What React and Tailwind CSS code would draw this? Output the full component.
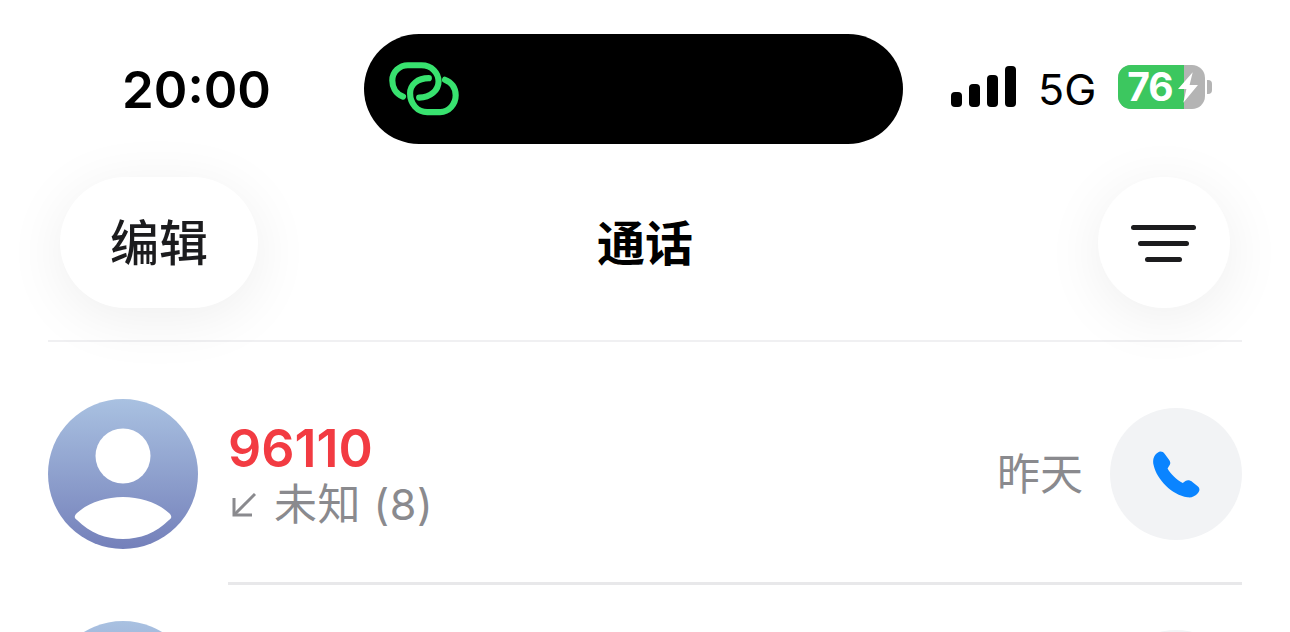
const SANS = "font-['Inter','Noto_Sans_CJK_SC',sans-serif]";

function LinkIcon() {
  return (
    <svg width="70" height="54" viewBox="112 125 216 167" fill="none" stroke="#38e26f" strokeWidth="19" strokeLinecap="round">
      <path d="M155 232 C130 222 122 200 122 182 C122 155 145 135 170 135 L212 135 C245 135 265 160 265 185 C265 212 240 235 205 235" />
      <path d="M235 175 C200 175 177 195 177 222 C177 255 200 280 230 280 L270 280 C297 280 318 255 318 228 C318 205 305 187 285 180" />
    </svg>
  );
}

function Signal() {
  return (
    <div className="mb-[5px] flex items-end gap-[7px]">
      <div className="h-[15px] w-[11px] rounded-[4px] bg-black" />
      <div className="h-[23px] w-[11px] rounded-[4px] bg-black" />
      <div className="h-[32px] w-[11px] rounded-[4px] bg-black" />
      <div className="h-[41px] w-[11px] rounded-[4px] bg-black" />
    </div>
  );
}

function Battery() {
  return (
    <div className="mb-[5px] flex items-center">
      <div className="relative flex h-[44px] w-[87px] items-center overflow-hidden rounded-[13px] bg-[#b4b4b4]">
        <div className="absolute inset-y-0 left-0 w-[66px] bg-[#3cc75f]" />
        <span className={`relative ml-[9px] text-[39px] leading-none font-bold tracking-[-1px] text-white ${SANS}`}>76</span>
        <svg className="absolute left-[59px] top-[7px]" width="22" height="31" viewBox="0 0 21 29" fill="#fff">
          <path d="M15 0 L1 16 L9 16 L6 29 L20 12 L12 12 Z" />
        </svg>
      </div>
      <div className="ml-[2px] h-[14px] w-[5px] rounded-r-[4px] bg-[#b4b4b4]" />
    </div>
  );
}

function Avatar() {
  return (
    <svg className="shrink-0" width="150" height="150" viewBox="0 0 150 150">
      <defs>
        <linearGradient id="av" x1="0" y1="0" x2="0" y2="1">
          <stop offset="0" stopColor="#a9c1e1" />
          <stop offset="1" stopColor="#7480ba" />
        </linearGradient>
      </defs>
      <circle cx="75" cy="75" r="75" fill="url(#av)" />
      <circle cx="75" cy="57" r="27.5" fill="#fff" />
      <path d="M29 114 C40 104 57 98 75 98 C93 98 110 104 121 114 C124 117 124 119 121 121 C108 134 92 140 75 140 C58 140 42 134 29 121 C26 119 26 117 29 114 Z" fill="#fff" />
    </svg>
  );
}

function PhoneIcon() {
  return (
    <svg width="49" height="49" viewBox="515 150 148 148" fill="#0a84ff">
      <path d="M532 158 C540 152 548 155 553 161 L567 180 C572 187 571 193 566 199 L562 206 C570 222 590 240 608 250 L616 244 C622 240 630 241 636 246 L652 259 C660 265 660 273 654 280 C645 290 634 295 622 293 C575 285 530 240 520 196 C516 180 520 166 532 158 Z" />
    </svg>
  );
}

function MissedArrow() {
  return (
    <svg className="mt-[2px] ml-[2px]" width="26" height="26" viewBox="0 0 26 26" fill="none" stroke="#8a8a8e" strokeWidth="3">
      <path d="M24 2 L3 23" />
      <path d="M3 6 L3 23 L21 23" />
    </svg>
  );
}

function CallRow() {
  return (
    <div className="mx-[48px] mt-[57px] flex h-[150px] items-center">
      <Avatar />
      <div className="ml-[31px] flex-1 pt-[3px]">
        <div className={`-ml-px text-[52px] leading-[54px] font-semibold text-[#f23b42] ${SANS}`}>96110</div>
        <div className={`flex items-center pt-[3px] text-[43px] leading-[50px] text-[#8a8a8e] ${SANS}`}>
          <MissedArrow />
          <span className="ml-[17px] tracking-[0.5px]">未知 (8)</span>
        </div>
      </div>
      <span className={`text-[43px] text-[#8a8a8e] ${SANS}`}>昨天</span>
      <div className="ml-[27px] flex h-[132px] w-[132px] items-center justify-center rounded-full bg-[#f2f3f5]">
        <PhoneIcon />
      </div>
    </div>
  );
}

function NextRow() {
  return (
    <div className="mx-[48px] mt-[36px] flex h-[150px] items-start justify-between">
      <Avatar />
      <div className="mt-[9px] h-[132px] w-[132px] rounded-full bg-[#f2f3f5]" />
    </div>
  );
}

export default function App() {
  return (
    <div className="h-[632px] w-[1290px] overflow-hidden bg-white">
      <div className="flex items-center pt-[34px] pl-[122px]">
        <div className={`w-[242px] text-[51px] leading-none font-semibold text-black ${SANS}`}>20:00</div>
        <div className="flex h-[110px] w-[539px] items-center rounded-[55px] bg-black pl-[25px]">
          <LinkIcon />
        </div>
        <div className="ml-[48px] flex items-center">
          <Signal />
          <span className="ml-[22px] font-['Inter',sans-serif] text-[43px] leading-none text-black">5G</span>
          <div className="ml-[22px]">
            <Battery />
          </div>
        </div>
      </div>

      <div className="mt-[33px] grid grid-cols-[1fr_auto_1fr] items-center px-[60px]">
        <div className={`flex h-[131px] w-[198px] items-center justify-center rounded-[66px] bg-white pt-[3px] text-[49px] font-medium text-[#1c1c1e] shadow-[0_10px_60px_rgba(0,0,0,0.07)] ${SANS}`}>
          编辑
        </div>
        <div className={`pt-[2px] text-[48px] font-semibold text-black ${SANS}`}>通话</div>
        <div className="flex h-[131px] w-[132px] flex-col items-center justify-center gap-[11px] justify-self-end rounded-full bg-white pt-[2px] pr-[2px] shadow-[0_10px_60px_rgba(0,0,0,0.07)]">
          <div className="h-[5px] w-[65px] rounded-full bg-[#1c1c1e]" />
          <div className="h-[5px] w-[51px] rounded-full bg-[#1c1c1e]" />
          <div className="h-[5px] w-[37px] rounded-full bg-[#1c1c1e]" />
        </div>
      </div>

      <div className="mx-[48px] mt-[32px] h-[2px] bg-[#f0f0f2]" />

      <CallRow />

      <div className="mt-[33px] mr-[48px] ml-[228px] h-[3px] bg-[#e8e8ea]" />

      <NextRow />
    </div>
  );
}
